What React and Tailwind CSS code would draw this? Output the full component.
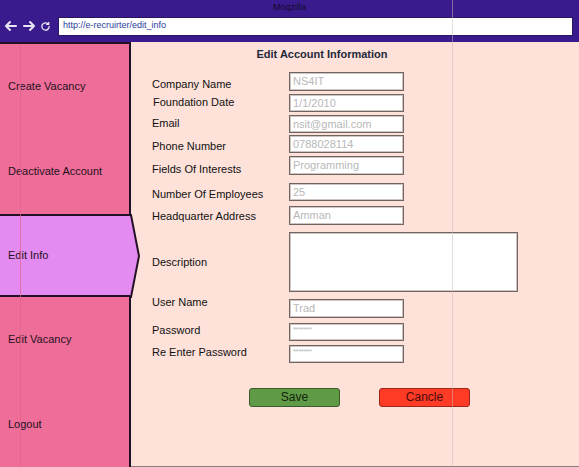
import React from 'react'

const fields = [
  { label: 'Company Name', value: 'NS4IT', mt: 'mt-[11px]', h: 'h-[19px]', lt: 'mt-[6px]' },
  { label: 'Foundation Date', value: '1/1/2010', mt: 'mt-[3px]', h: 'h-[18px]', lt: 'mt-[2px] pl-[1px]' },
  { label: 'Email', value: 'nsit@gmail.com', mt: 'mt-[3px]', h: 'h-[18px]', lt: 'mt-[2px]' },
  { label: 'Phone Number', value: '0788028114', mt: 'mt-[2px]', h: 'h-[18px]', lt: 'mt-[5px]' },
  { label: 'Fields Of Interests', value: 'Programming', mt: 'mt-[3px]', h: 'h-[19px]', lt: 'mt-[7px]' },
  { label: 'Number Of Employees', value: '25', mt: 'mt-[8px]', h: 'h-[18px]', lt: 'mt-[5px]' },
  { label: 'Headquarter Address', value: 'Amman', mt: 'mt-[5px]', h: 'h-[19px]', lt: 'mt-[4px]' },
]

const accountFields = [
  { label: 'User Name', value: 'Trad', mt: 'mt-[7px]', h: 'h-[19px]', lt: '-mt-[3px]' },
  { label: 'Password', value: '*******', pw: true, mt: 'mt-[5px]', h: 'h-[18px]', lt: 'mt-[1px]' },
  { label: 'Re Enter Password', value: '*******', pw: true, mt: 'mt-[4px]', h: 'h-[18px]', lt: 'mt-[1px]' },
]

function Row({ f }) {
  return (
    <div className={`flex items-start ${f.mt} ${f.h}`}>
      <div className={`w-[137px] shrink-0 text-[11px] leading-[13px] text-[#111] ${f.lt}`}>{f.label}</div>
      <div className={`w-[115px] ${f.h} bg-white border border-[#6f6460] shadow-[inset_0_0_0_1px_#cfc6c3] pl-[3px] text-[#b8b8b8] overflow-hidden`}>
        {f.pw ? (
          <span className="block text-[8px] leading-[10px] pt-[1px] tracking-[-0.5px]">{f.value}</span>
        ) : (
          <span className="block text-[11px] leading-[16px]">{f.value}</span>
        )}
      </div>
    </div>
  )
}

function NavItem({ children }) {
  return <div className="h-[85px] flex items-center pl-[8px] text-[11px] text-[#1e1220]">{children}</div>
}

export default function App() {
  return (
    <div className="relative w-[579px] h-[467px] overflow-hidden font-['Liberation_Sans',Arial,sans-serif] bg-[#fee1d9]">
      {/* browser chrome */}
      <div className="h-[42px] bg-[#3a1b8e] flex flex-col">
        <div className="h-[14px] text-center text-[9px] leading-[14px] text-[#120c2a]">Moqzilla</div>
        <div className="flex items-center h-[24px]">
          <div className="flex items-center gap-[4px] pl-[4px] w-[58px]">
            <svg width="14" height="12" viewBox="0 0 14 12" fill="none" stroke="#e9e6f3" strokeWidth="2" strokeLinecap="round" strokeLinejoin="round">
              <path d="M12 6H2M6 2L2 6l4 4" />
            </svg>
            <svg width="14" height="12" viewBox="0 0 14 12" fill="none" stroke="#e9e6f3" strokeWidth="2" strokeLinecap="round" strokeLinejoin="round">
              <path d="M2 6h10M8 2l4 4-4 4" />
            </svg>
            <svg width="11" height="11" viewBox="0 0 12 12" fill="none" stroke="#e9e6f3" strokeWidth="1.4" strokeLinecap="round">
              <path d="M10 6a4 4 0 1 1-1.2-2.9" />
              <path d="M9.5 1.5v2.2H7.3" />
            </svg>
          </div>
          <div className="w-[515px] h-[19px] bg-white border border-[#2a1660] flex items-center pl-[4px] text-[9px] text-[#2b3d9c]">
            http://e-recruirter/edit_info
          </div>
        </div>
      </div>

      <div className="flex h-[425px]">
        {/* sidebar */}
        <div className="w-[131px] shrink-0 flex flex-col border-t-[2px] border-[#241024]">
          <div className="bg-[#ef6d99] border-r-[2px] border-[#241024]">
            <NavItem>Create Vacancy</NavItem>
            <NavItem>Deactivate Account</NavItem>
          </div>
          <div className="relative h-[84px] bg-[#e48bf1] border-y-[2px] border-[#241024] flex items-center pl-[8px] text-[11px] text-[#1e1220]">
            Edit Info
            <svg className="absolute -right-[9px] -top-[2px]" width="10" height="84" viewBox="0 0 10 84">
              <polygon points="0,0 1,0 9,42 1,84 0,84" fill="#e48bf1" />
              <polyline points="0,1 1,1 9,42 1,83 0,83" fill="none" stroke="#241024" strokeWidth="2" />
            </svg>
          </div>
          <div className="flex-1 bg-[#ef6d99] border-r-[2px] border-[#241024]">
            <NavItem>Edit Vacancy</NavItem>
            <NavItem>Logout</NavItem>
          </div>
        </div>

        {/* main */}
        <div className="flex-1 pl-[21px] pt-[5px]">
          <div className="h-[14px] leading-[14px] text-[11px] font-bold text-[#1d2a3a] text-center w-[340px]">
            Edit Account Information
          </div>
          {fields.map((f) => <Row key={f.label} f={f} />)}
          <div className="flex items-start mt-[7px] h-[60px]">
            <div className="w-[137px] shrink-0 text-[11px] leading-[13px] text-[#111] mt-[24px]">Description</div>
            <div className="w-[229px] h-[60px] bg-white border border-[#6f6460] shadow-[inset_0_0_0_1px_#cfc6c3]" />
          </div>
          {accountFields.map((f) => <Row key={f.label} f={f} />)}
          <div className="flex gap-[39px] mt-[25px] pl-[97px]">
            <button className="w-[91px] h-[19px] rounded-[3px] bg-[#5f9b46] border border-[#3b5a2e] text-[12px] leading-[17px] text-[#14240c]">Save</button>
            <button className="w-[91px] h-[19px] rounded-[3px] bg-[#ff3a25] border border-[#9c2618] text-[12px] leading-[17px] text-[#4a0c08]">Cancle</button>
          </div>
        </div>
      </div>

      {/* wireframe guides */}
      <div className="absolute left-[20px] top-[44px] w-px h-[423px] bg-[#e2628d] opacity-70 pointer-events-none" />
      <div className="absolute left-[452px] top-0 w-px h-[467px] bg-[#cdbab5] opacity-50 pointer-events-none" />
      <div className="absolute left-[131px] top-[466px] w-[448px] h-px bg-[#8a7f7c] pointer-events-none" />
    </div>
  )
}
